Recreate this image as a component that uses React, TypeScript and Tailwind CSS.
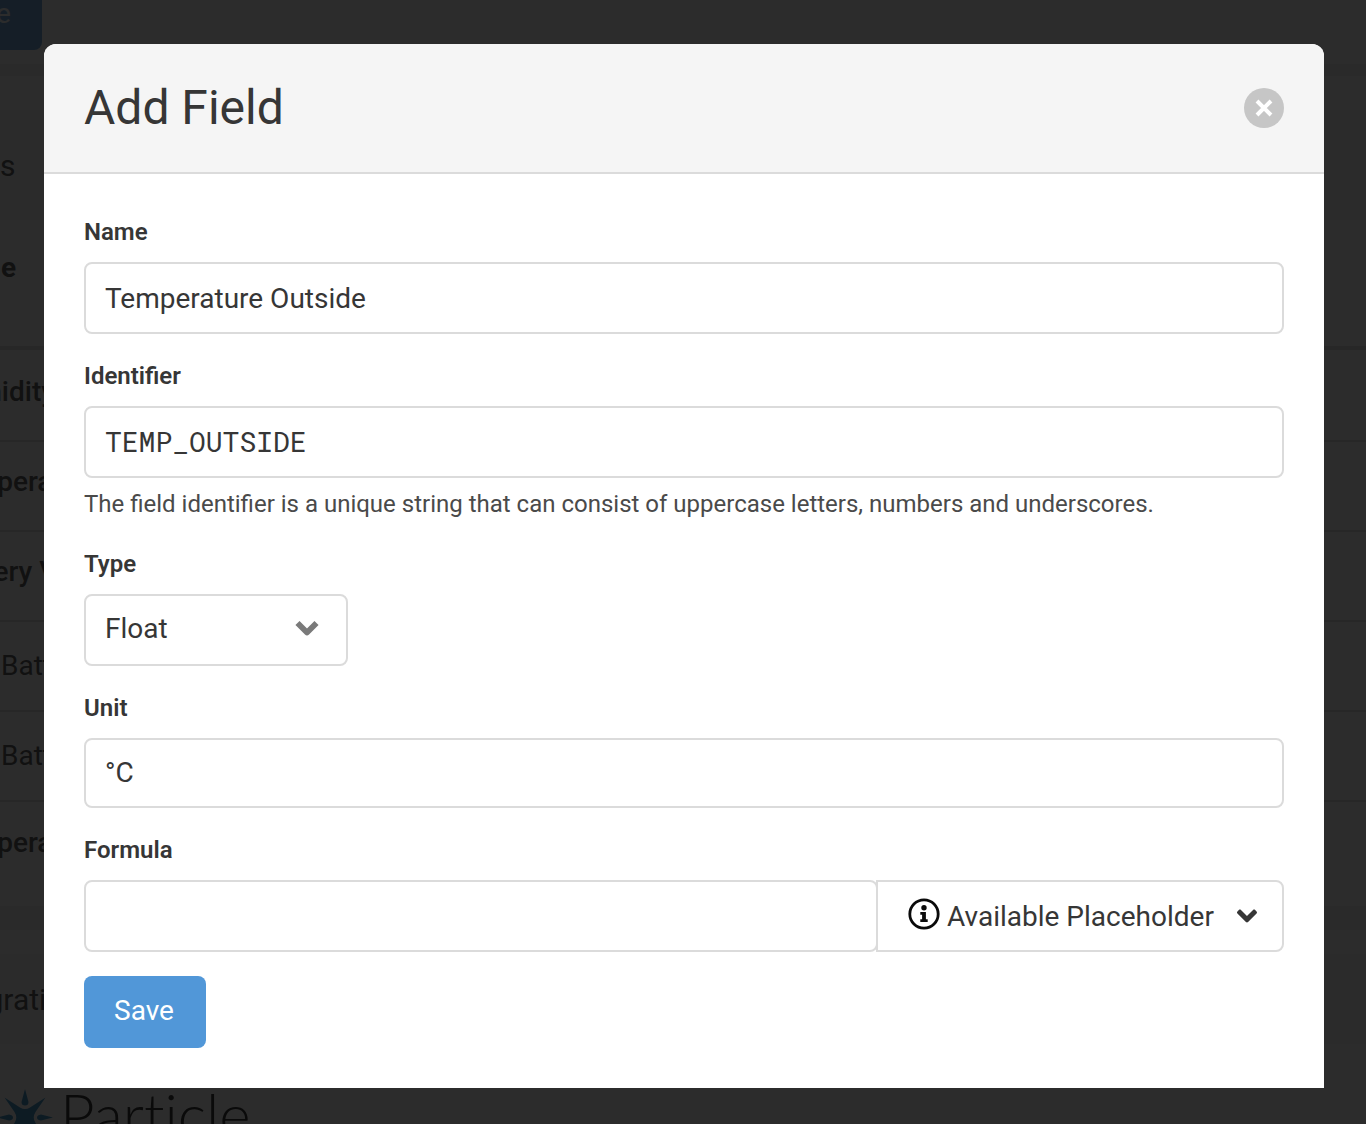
import React, { useState } from 'react';
import { FaAngleDown } from 'react-icons/fa';

const rows = [
  { name: 'Humidity', strong: true },
  { name: 'Temperature', strong: true },
  { name: 'Battery Voltage', strong: true },
  { name: 'Low Battery', strong: false },
  { name: 'Low Battery', strong: false },
  { name: 'Temperature', strong: true },
];

const inputClass =
  'block w-full rounded-lg border-2 border-[#dbdbdb] bg-white px-[19px] text-[28px] text-[#363636] outline-none';
const labelClass = 'mb-3 block text-2xl leading-9 font-semibold text-[#363636]';

function ParticleLogo() {
  return (
    <svg width="60" height="60" viewBox="-4 0 60 60" fill="#1b80bd">
      <path d="M25 1 L28.500 14 Q28.500 17.500 25 17.500 Q21.500 17.500 21.500 14 Z" />
      <path d="M-3 29.500 L9 26.500 Q13 27 13 29.500 Q13 32 9 32.500 Z" />
      <path d="M53 29.500 L41 26.500 Q37 27 37 29.500 Q37 32 41 32.500 Z" />
      <path d="M25 58 L28.500 45 Q28.500 41.500 25 41.500 Q21.500 41.500 21.500 45 Z" />
      <path d="M4.500 9.500 L20 19.500 Q25 22.500 30 19.500 L45.500 9.500 L35.500 24 Q32 29.500 35.500 35 L45.500 49.500 L30 39.500 Q25 36.500 20 39.500 L4.500 49.500 L14.500 35 Q18 29.500 14.500 24 Z" />
    </svg>
  );
}

function InfoIcon() {
  return (
    <svg width="32" height="32" viewBox="0 0 32 32" fill="#0a0a0a" aria-hidden="true">
      <circle cx="16" cy="16" r="14.200" fill="none" stroke="#0a0a0a" strokeWidth="2.800" />
      <circle cx="16" cy="9.800" r="2.700" />
      <path d="M12.300 14 H17.900 V21.300 H19.700 V24 H12.300 V21.300 H14.100 V16.700 H12.300 Z" />
    </svg>
  );
}

function DevicePage() {
  return (
    <div aria-hidden="true" className="-ml-20 bg-white text-[#363636]">
      <div className="flex h-16 items-end pb-3.5">
        <div className="flex h-18 w-[122px] items-center justify-center rounded-lg bg-[#5197d8] text-[28px] text-white">
          Save
        </div>
      </div>
      <div className="h-3 bg-[#ededed]" />
      <div className="h-[34px] bg-[#fafafa]" />
      <div className="flex h-[110px] items-center bg-[#f5f5f5] px-4 text-[30px]">Fields</div>
      <div className="h-[130px] border-b-4 border-[#dbdbdb] px-[22px] pt-[30px] text-[28px] leading-9 font-bold">
        Name
      </div>
      <div className="divide-y-2 divide-[#dbdbdb] pt-0.5 pb-3.5">
        {rows.map((row, i) => (
          <div
            key={i}
            className={`flex h-[90px] items-center px-[22px] text-[28px] ${row.strong ? 'pb-2 font-medium' : ''}`}
          >
            {row.name}
          </div>
        ))}
      </div>
      <div className="h-6 bg-[#ededed]" />
      <div className="h-6 bg-[#fafafa]" />
      <div className="flex h-[90px] items-center bg-[#f5f5f5] px-4 text-[30px]">Integrations</div>
      <div className="flex items-start gap-1 pt-11 pl-[76px]">
        <ParticleLogo />
        <span className="font-['Lato',sans-serif] text-[60px] leading-[52px] font-light text-black [font-variant-ligatures:none]">
          Particle
        </span>
      </div>
    </div>
  );
}

function AddFieldForm() {
  const [name, setName] = useState('Temperature Outside');
  const [identifier, setIdentifier] = useState('TEMP_OUTSIDE');
  const [unit, setUnit] = useState('°C');
  const [formula, setFormula] = useState('');

  return (
    <form className="flex flex-col gap-6 p-10" onSubmit={(e) => e.preventDefault()}>
      <div>
        <label htmlFor="name" className={labelClass}>Name</label>
        <input
          id="name"
          className={`${inputClass} h-18`}
          value={name}
          onChange={(e) => setName(e.target.value)}
        />
      </div>

      <div>
        <label htmlFor="identifier" className={labelClass}>Identifier</label>
        <input
          id="identifier"
          className={`${inputClass} h-18 pb-0.5 font-['Roboto_Mono','Liberation_Mono',monospace]`}
          value={identifier}
          onChange={(e) => setIdentifier(e.target.value)}
        />
        <p className="mt-2 text-2xl leading-9 text-[#4a4a4a]">
          The field identifier is a unique string that can consist of uppercase letters, numbers and underscores.
        </p>
      </div>

      <div>
        <label htmlFor="type" className={labelClass}>Type</label>
        <div className="relative w-[264px]">
          <select id="type" defaultValue="Float" className={`${inputClass} h-18 appearance-none pb-0.5`}>
            <option>Float</option>
            <option>Integer</option>
            <option>String</option>
          </select>
          <svg
            className="pointer-events-none absolute top-[26px] right-7"
            width="26"
            height="18"
            viewBox="0 0 26 18"
            fill="none"
            aria-hidden="true"
          >
            <path d="M3.500 3 L13 12.500 L22.500 3" stroke="#7a7a7a" strokeWidth="5.800" strokeLinejoin="round" />
          </svg>
        </div>
      </div>

      <div>
        <label htmlFor="unit" className={labelClass}>Unit</label>
        <input
          id="unit"
          className={`${inputClass} h-[70px] pb-0.5`}
          value={unit}
          onChange={(e) => setUnit(e.target.value)}
        />
      </div>

      <div>
        <label htmlFor="formula" className={labelClass}>Formula</label>
        <div className="flex">
          <input
            id="formula"
            className={`${inputClass} h-18 min-w-0 flex-1`}
            value={formula}
            onChange={(e) => setFormula(e.target.value)}
          />
          <button
            type="button"
            className="-ml-0.5 flex h-18 w-[408px] items-center justify-between rounded-r-lg border-2 border-[#dbdbdb] bg-white pr-[19px] pb-1 pl-[30px] text-[28px] text-[#363636]"
          >
            <span className="flex items-center gap-[7px]">
              <InfoIcon />
              <span className="pt-1.5">Available Placeholder</span>
            </span>
            <FaAngleDown className="mt-1 size-8" />
          </button>
        </div>
      </div>

      <button
        type="submit"
        className="h-18 w-[122px] rounded-lg bg-[#5197d8] pr-0.5 pb-0.5 text-[28px] text-white"
      >
        Save
      </button>
    </form>
  );
}

export default function App() {
  return (
    <div className="h-screen overflow-hidden font-['Roboto',sans-serif]">
      <DevicePage />
      <div className="fixed inset-0 overflow-hidden bg-[#0c0c0c]/[0.865] pt-11 pr-[42px] pl-11">
        <div role="dialog" aria-label="Add Field" className="overflow-hidden rounded-t-xl bg-white">
          <header className="flex h-[130px] items-center justify-between border-b-2 border-[#dbdbdb] bg-[#f5f5f5] px-10">
            <h1 className="text-5xl text-[#363636]">Add Field</h1>
            <button
              type="button"
              aria-label="Close"
              className="flex size-10 items-center justify-center rounded-full bg-[#c6c6c6]"
            >
              <svg width="18" height="18" viewBox="0 0 18 18" aria-hidden="true">
                <path d="M2 2 L16 16 M16 2 L2 16" stroke="#fff" strokeWidth="4" />
              </svg>
            </button>
          </header>
          <AddFieldForm />
        </div>
      </div>
    </div>
  );
}
